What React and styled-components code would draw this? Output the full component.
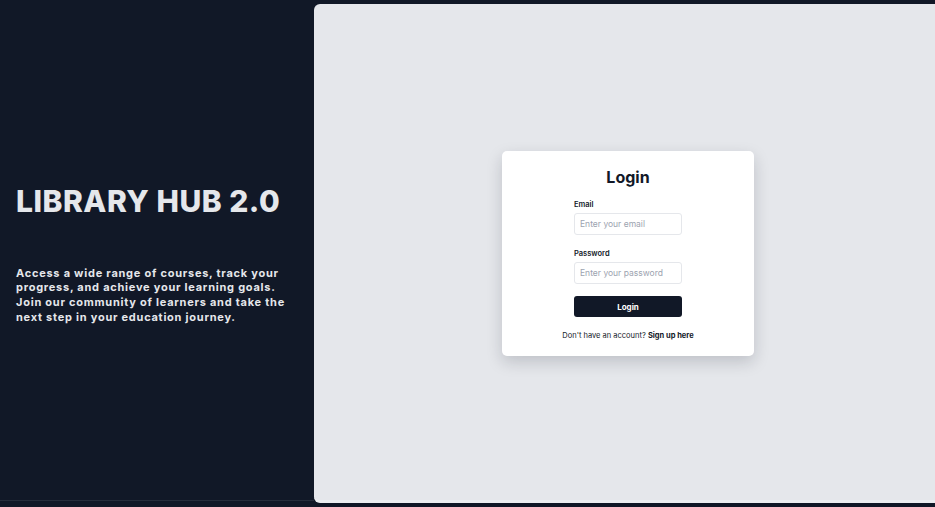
import React from 'react'
import styled, { createGlobalStyle } from 'styled-components'

const Global = createGlobalStyle`
  html, body {
    margin: 0;
    padding: 0;
    background: #111827;
    font-family: 'Inter', 'Noto Sans', sans-serif;
  }
  * { box-sizing: border-box; }
`

export default function App() {
  return (
    <>
      <Global />
      <Page>
        <Intro>
          <Title>LIBRARY HUB 2.0</Title>
          <Blurb>
            Access a wide range of courses, track your progress, and achieve your
            learning goals. Join our community of learners and take the next step
            in your education journey.
          </Blurb>
        </Intro>
        <Stage>
          <Card>
            <Heading>Login</Heading>
            <Form onSubmit={(e) => e.preventDefault()}>
              <Field>
                <Label>Email</Label>
                <Input type='email' placeholder='Enter your email' />
              </Field>
              <Field>
                <Label>Password</Label>
                <Input type='password' placeholder='Enter your password' />
              </Field>
              <Button type='submit'>Login</Button>
            </Form>
            <Footer>
              Don't have an account? <a href='#'>Sign up here</a>
            </Footer>
          </Card>
        </Stage>
      </Page>
    </>
  )
}

const Page = styled.div`
  display: flex;
  height: 507px;
  width: 935px;
  overflow: hidden;
`

const Intro = styled.section`
  width: 314px;
  flex-shrink: 0;
  display: flex;
  flex-direction: column;
  justify-content: center;
  padding: 7px 22px 0 16px;
  gap: 47px;
  border-bottom: 1px solid #262d3b;
  margin-bottom: 6px;
`

const Title = styled.h1`
  margin: 0;
  color: #e5e7eb;
  font-size: 30px;
  font-weight: 800;
  letter-spacing: 0.5px;
  line-height: 1.2;
  white-space: nowrap;
`

const Blurb = styled.p`
  margin: 0;
  color: #e5e7eb;
  font-size: 11px;
  font-weight: 700;
  letter-spacing: 0.75px;
  line-height: 14.7px;
`

const Stage = styled.main`
  flex: 1;
  margin: 4px 0 4px;
  background: #e5e7eb;
  border-radius: 6px 0 0 6px;
  border-bottom: 3px solid #eceef1;
  display: flex;
  align-items: center;
  justify-content: center;
  padding-top: 3px;
  padding-left: 7px;
`

const Card = styled.div`
  width: 252px;
  height: 205px;
  background: #ffffff;
  border-radius: 5px;
  box-shadow: 0 6px 16px rgba(17, 24, 39, 0.18);
  display: flex;
  flex-direction: column;
  align-items: center;
  padding-top: 15px;
`

const Heading = styled.h2`
  margin: 0 0 12px;
  font-size: 16px;
  font-weight: 700;
  color: #111827;
  line-height: 22px;
`

const Form = styled.form`
  width: 108px;
  display: flex;
  flex-direction: column;
`

const Field = styled.div`
  display: flex;
  flex-direction: column;
  gap: 3px;
  margin-bottom: 14px;
`

const Label = styled.label`
  font-size: 7.5px;
  font-weight: 600;
  color: #111827;
  line-height: 10px;
`

const Input = styled.input`
  height: 22px;
  width: 100%;
  border: 1px solid #e5e7eb;
  border-radius: 3px;
  padding: 0 5px;
  font-family: inherit;
  font-size: 8.5px;
  color: #111827;
  outline: none;
  &::placeholder { color: #9ca3af; }
`

const Button = styled.button`
  height: 21px;
  margin-top: -2px;
  border: none;
  border-radius: 3px;
  background: #111827;
  color: #ffffff;
  font-family: inherit;
  font-size: 8px;
  font-weight: 700;
  cursor: pointer;
`

const Footer = styled.p`
  margin: 14px 0 0;
  font-size: 7.5px;
  color: #111827;
  a {
    color: #111827;
    font-weight: 700;
    text-decoration: none;
  }
`
